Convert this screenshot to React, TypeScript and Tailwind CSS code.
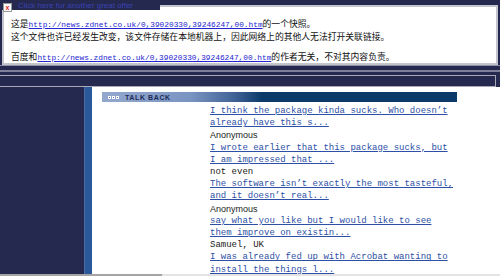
import React from "react";

const URL = "http://news.zdnet.co.uk/0,39020330,39246247,00.htm";

const cjk = "font-['SimSun','Noto_Sans_CJK_SC',sans-serif]";
const mono = "font-['Liberation_Mono','Noto_Sans_CJK_SC',monospace]";

const comments = [
  { lines: ["I think the package kinda sucks. Who doesn’t", "already have this s..."], author: "Anonymous", sans: true },
  { lines: ["I wrote earlier that this package sucks, but", "I am impressed that ..."], author: "not even", sans: false },
  { lines: ["The software isn’t exactly the most tasteful,", "and it doesn’t real..."], author: "Anonymous", sans: true },
  { lines: ["say what you like but I would like to see", "them improve on existin..."], author: "Samuel, UK", sans: false },
  { lines: ["I was already fed up with Acrobat wanting to", "install the things l..."], author: null, sans: false },
];

const SnapshotLink = () => (
  <a className={`${mono} text-[7.8px] text-[#2424d0] underline`}>{URL}</a>
);

export default function App() {
  return (
    <div className="relative w-[500px] h-[276px] overflow-hidden bg-[#25284f] flex flex-col">
      {/* cached page notice */}
      <div className="pt-[5px] px-[2px]">
        <div className={`${cjk} h-[60px] bg-white border-2 border-[#c4c4cc] pl-[7px] pt-[11px] text-[8.8px] leading-[11px] text-[#111]`}>
          <div>
            这是<SnapshotLink />的一个快照。
          </div>
          <div>这个文件也许已经发生改变，该文件存储在本地机器上，因此网络上的其他人无法打开关联链接。</div>
          <div className="mt-[9px]">
            百度和<SnapshotLink />的作者无关，不对其内容负责。
          </div>
        </div>
      </div>

      {/* broken banner image */}
      <div className="absolute left-[2px] top-0 w-[158px] h-[10px] bg-[#25284f] flex items-start">
        <div className="mt-[3px] ml-[1px] w-[9px] h-[9px] bg-white border border-[#9a9a9a] flex items-center justify-center">
          <span className="text-[#e02020] text-[7px] leading-none font-bold font-['Liberation_Sans',sans-serif]">x</span>
        </div>
        <span className="ml-[6px] mt-[1px] text-[8px] leading-[9px] text-[#3a44b0] font-['Liberation_Sans',sans-serif]">
          Click here for another great offer
        </span>
      </div>

      {/* separator bands */}
      <div className="h-[1px] bg-[#8e8ea4]" />
      <div className="h-[4px]" />
      <div className="h-[2px] bg-[#80809a]" />
      <div className="h-[3px]" />
      <div className="h-[12px] border-t border-r border-b border-[#a8a8b8] mr-[4px]" />

      {/* lower frame */}
      <div className="flex flex-1 min-h-0">
        <div className="w-[84px] bg-[#25284f]" />
        <div className="w-[8px] flex">
          <div className="w-[1px] bg-[#4d6aa6]" />
          <div className="flex-1 bg-[#2a5898]" />
        </div>
        <div className="flex-1 bg-white pt-[5px]">
          <div className="ml-[10px] w-[355px] h-[10px] flex items-center bg-[linear-gradient(90deg,#93a8cf_0%,#7a94c2_25%,#3c5f92_38%,#0c3a68_45%,#0c3a68_100%)]">
            <div className="ml-[6px] flex gap-[1px]">
              <span className="w-[3px] h-[3px] border border-white bg-[#5e78a8]" />
              <span className="w-[3px] h-[3px] border border-white bg-[#5e78a8]" />
              <span className="w-[3px] h-[3px] border border-white bg-[#5e78a8]" />
            </div>
            <span className="ml-[6px] text-[7px] leading-none font-bold tracking-[0.6px] text-[#1c2c55] font-['Liberation_Sans',sans-serif]">
              TALK BACK
            </span>
          </div>
          <div className="pl-[118px] pt-[3px] text-[9px] leading-[12.2px]">
            {comments.map((c, i) => (
              <div key={i}>
                <a className={`${mono} block text-[#2d4fa6] underline`}>
                  {c.lines[0]}
                  <br />
                  {c.lines[1]}
                </a>
                {c.author && (
                  <div
                    className={
                      c.sans
                        ? "font-['Liberation_Sans',sans-serif] text-[#222]"
                        : `${mono} text-[#222]`
                    }
                  >
                    {c.author}
                  </div>
                )}
              </div>
            ))}
          </div>
        </div>
      </div>

      {/* scrollbar edge */}
      <div className="absolute left-0 bottom-0 w-full h-[2px] flex">
        <div className="w-[162px] bg-[#a4a4a4]" />
        <div className="flex-1 bg-[#e4e4e4]" />
      </div>
    </div>
  );
}
